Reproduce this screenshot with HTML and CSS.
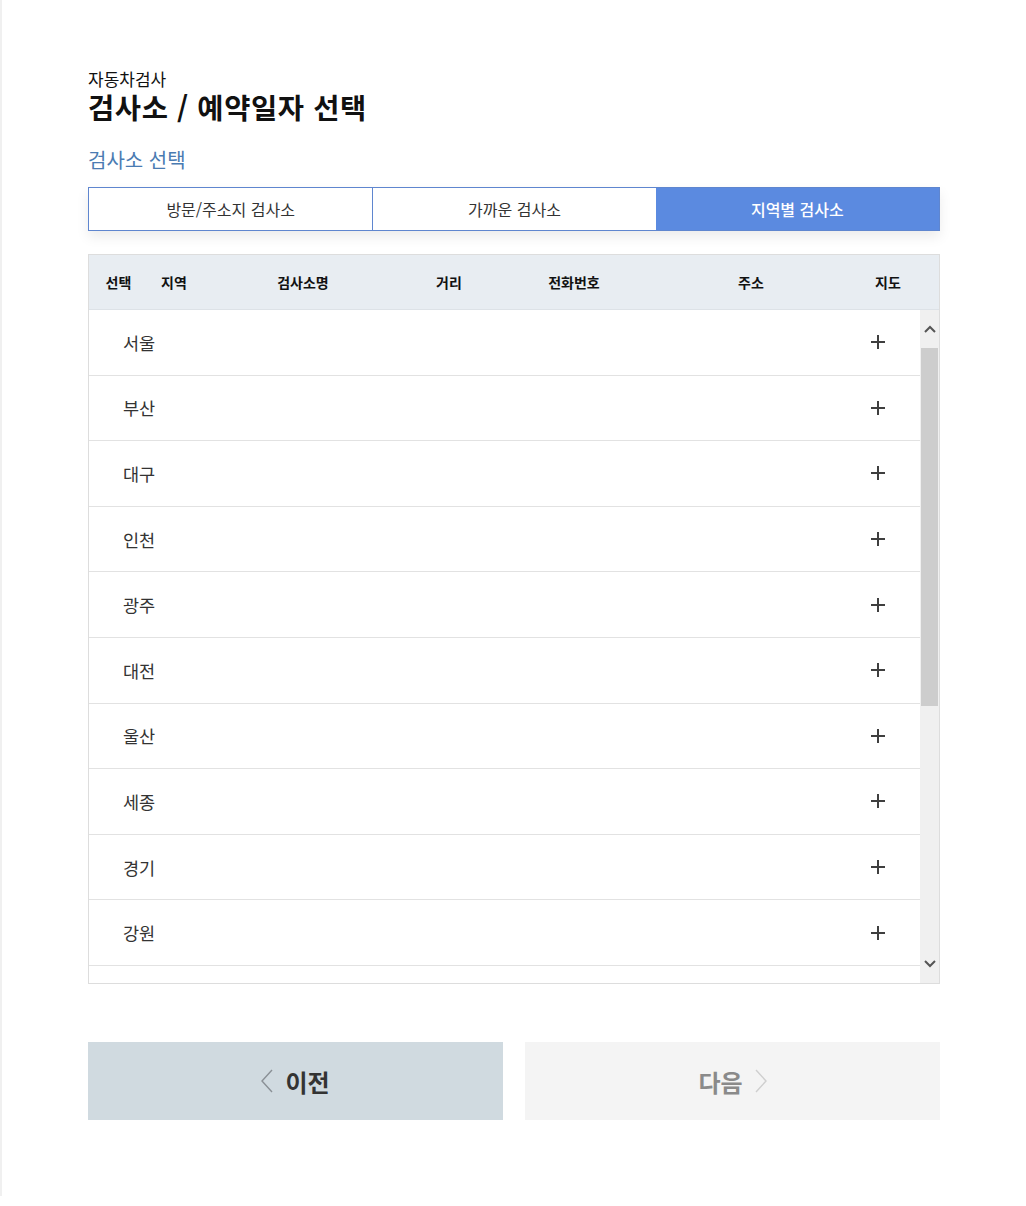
FILE: index.html
```html
<!DOCTYPE html>
<html lang="ko">
<head>
<meta charset="utf-8">
<title>검사소 / 예약일자 선택</title>
<link rel="stylesheet" href="styles.css">
</head>
<body>
<div class="frame">
  <main class="page">
    <p class="eyebrow">자동차검사</p>
    <h1 class="title">검사소 / 예약일자 선택</h1>
    <h2 class="section-title">검사소 선택</h2>

    <div class="tabs">
      <button class="tab">방문/주소지 검사소</button>
      <button class="tab">가까운 검사소</button>
      <button class="tab tab-active">지역별 검사소</button>
    </div>

    <div class="table">
      <div class="thead">
        <span>선택</span>
        <span>지역</span>
        <span>검사소명</span>
        <span>거리</span>
        <span>전화번호</span>
        <span>주소</span>
        <span>지도</span>
      </div>
      <div class="tbody-wrap">
        <ul class="tbody">
          <li class="row"><span class="region">서울</span><span class="plus"></span></li>
          <li class="row"><span class="region">부산</span><span class="plus"></span></li>
          <li class="row"><span class="region">대구</span><span class="plus"></span></li>
          <li class="row"><span class="region">인천</span><span class="plus"></span></li>
          <li class="row"><span class="region">광주</span><span class="plus"></span></li>
          <li class="row"><span class="region">대전</span><span class="plus"></span></li>
          <li class="row"><span class="region">울산</span><span class="plus"></span></li>
          <li class="row"><span class="region">세종</span><span class="plus"></span></li>
          <li class="row"><span class="region">경기</span><span class="plus"></span></li>
          <li class="row"><span class="region">강원</span><span class="plus"></span></li>
          <li class="row"><span class="region">충북</span><span class="plus"></span></li>
          <li class="row"><span class="region">충남</span><span class="plus"></span></li>
          <li class="row"><span class="region">전북</span><span class="plus"></span></li>
          <li class="row"><span class="region">전남</span><span class="plus"></span></li>
          <li class="row"><span class="region">경북</span><span class="plus"></span></li>
          <li class="row"><span class="region">경남</span><span class="plus"></span></li>
          <li class="row"><span class="region">제주</span><span class="plus"></span></li>
        </ul>
        <div class="scrollbar" aria-hidden="true">
          <span class="sb-btn">
            <svg width="12" height="8" viewBox="0 0 12 8"><polyline points="1,7 6,2 11,7" fill="none" stroke="#555" stroke-width="2"/></svg>
          </span>
          <span class="sb-track"><span class="sb-thumb"></span></span>
          <span class="sb-btn">
            <svg width="12" height="8" viewBox="0 0 12 8"><polyline points="1,1 6,6 11,1" fill="none" stroke="#555" stroke-width="2"/></svg>
          </span>
        </div>
      </div>
    </div>

    <div class="actions">
      <button class="btn btn-prev">
        <svg class="chev" width="12" height="24" viewBox="0 0 12 24"><polyline points="11,1 1,12 11,23" fill="none" stroke="#8a9096" stroke-width="1.4"/></svg>
        <span>이전</span>
      </button>
      <button class="btn btn-next">
        <span>다음</span>
        <svg class="chev" width="12" height="24" viewBox="0 0 12 24"><polyline points="1,1 11,12 1,23" fill="none" stroke="#cfcfcf" stroke-width="1.4"/></svg>
      </button>
    </div>
  </main>
</div>
</body>
</html>
```

FILE: styles.css
```css
* {
  box-sizing: border-box;
}

html, body {
  margin: 0;
  padding: 0;
  background: #ffffff;
}

body {
  font-family: "Noto Sans CJK KR", "Noto Sans", sans-serif;
  color: #222;
}

.frame {
  min-height: 1196px;
  border-left: 2px solid #f0f0f0;
}

.page {
  width: 852px;
  margin-left: 86px;
  padding-top: 69px;
}

.eyebrow {
  margin: 0;
  font-size: 17px;
  line-height: 20px;
  color: #111;
  font-weight: 400;
}

.title {
  margin: 3px 0 0;
  font-size: 28.5px;
  line-height: 30px;
  font-weight: 700;
  color: #111;
  letter-spacing: 0.6px;
}

.section-title {
  margin: 24px 0 0;
  font-size: 20px;
  line-height: 28px;
  font-weight: 400;
  color: #4a7bb2;
}

.tabs {
  margin-top: 13px;
  display: grid;
  grid-template-columns: 1fr 1fr 1fr;
  border: 1px solid #5f86cf;
  height: 44px;
  box-shadow: 0 6px 12px rgba(0, 0, 0, 0.08);
}

.tab {
  font-family: inherit;
  font-size: 16px;
  color: #333;
  background: #fff;
  border: 0;
  border-left: 1px solid #5f86cf;
  padding: 0;
  margin: 0;
}

.tab:first-child {
  border-left: 0;
}

.tab-active {
  background: #5b8ae0;
  color: #fff;
  border-left: 0;
  font-weight: 500;
}

.table {
  margin-top: 23px;
  border: 1px solid #dddddd;
}

.thead {
  display: grid;
  grid-template-columns: 59px 52px 206px 86px 164px 190px 84px 1fr;
  height: 55px;
  align-items: center;
  background: #e8edf2;
  border-bottom: 1px solid #dde2e7;
  font-size: 14px;
  font-weight: 700;
  color: #111;
  text-align: center;
}

.tbody-wrap {
  display: flex;
  height: 673px;
}

.tbody {
  flex: 1;
  list-style: none;
  margin: 0;
  padding: 0;
  overflow-y: auto;
  scrollbar-width: none;
}

.tbody::-webkit-scrollbar {
  display: none;
}

.row {
  display: flex;
  align-items: center;
  justify-content: space-between;
  height: 65.6px;
  border-bottom: 1px solid #e2e2e2;
  padding: 0 35px 0 34px;
  font-size: 17.5px;
  color: #333;
}

.plus {
  position: relative;
  width: 14px;
  height: 14px;
}

.plus::before,
.plus::after {
  content: "";
  position: absolute;
  background: #3f3f3f;
}

.plus::before {
  left: 0;
  top: 6px;
  width: 14px;
  height: 2px;
}

.plus::after {
  left: 6px;
  top: 0;
  width: 2px;
  height: 14px;
}

.scrollbar {
  width: 19px;
  display: flex;
  flex-direction: column;
  background: #f0f0f0;
}

.sb-btn {
  height: 38px;
  display: flex;
  align-items: center;
  justify-content: center;
}

.sb-track {
  flex: 1;
  display: flex;
  flex-direction: column;
  padding: 0 1px;
}

.sb-thumb {
  height: 358px;
  background: #cdcdcd;
}

.actions {
  margin-top: 58px;
  display: grid;
  grid-template-columns: 1fr 1fr;
  column-gap: 22px;
}

.btn {
  height: 78px;
  border: 0;
  margin: 0;
  display: flex;
  align-items: center;
  justify-content: center;
  gap: 12px;
  font-family: inherit;
  font-size: 24px;
  font-weight: 700;
}

.btn-prev {
  background: #d0dae0;
  color: #333;
}

.btn-next {
  background: #f4f4f4;
  color: #8a8a8a;
}
```
